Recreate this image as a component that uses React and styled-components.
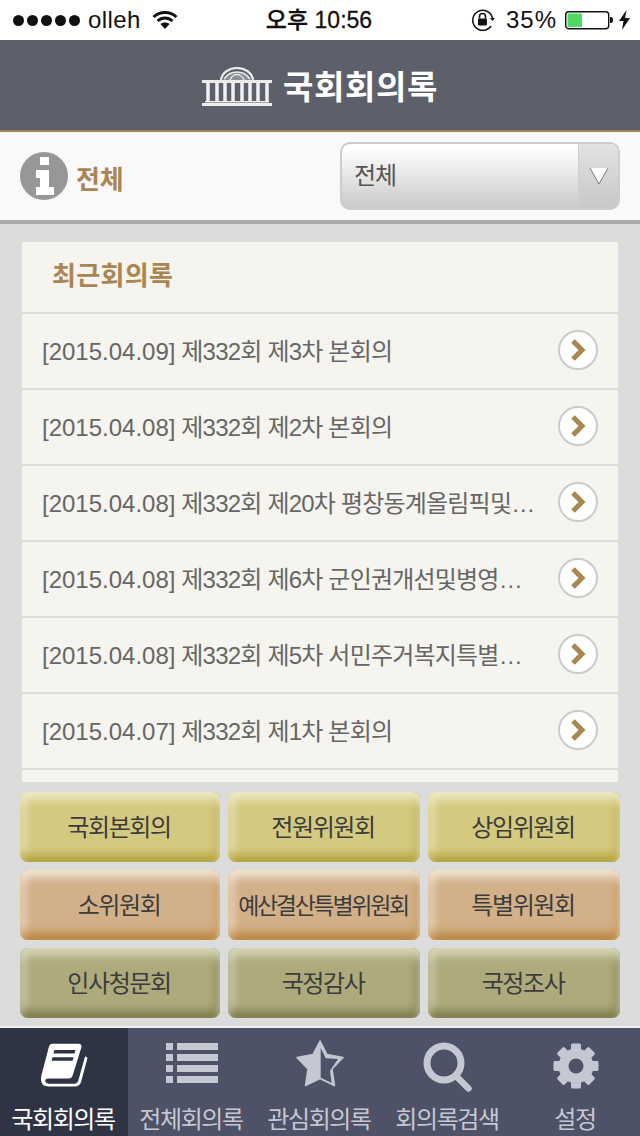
import React from "react";
import styled, { createGlobalStyle } from "styled-components";

const FONT = `"Liberation Sans", "Noto Sans CJK KR", sans-serif`;

const Global = createGlobalStyle`
  html, body { margin: 0; padding: 0; background: #dcdcdc; }
  body { font-family: ${FONT}; }
  * { box-sizing: border-box; }
`;

const Page = styled.div`
  width: 640px;
  height: 1136px;
  display: flex;
  flex-direction: column;
  overflow: hidden;
  background: #dcdcdc;
`;

const StatusBar = styled.div`
  height: 40px;
  background: #fff;
  display: grid;
  grid-template-columns: 1fr auto 1fr;
  align-items: center;
  color: #111;
  font-size: 24px;
  line-height: 40px;
`;
const StatusLeft = styled.div`
  display: flex;
  align-items: center;
  padding-left: 13px;
`;
const Dots = styled.div`
  display: flex;
  gap: 3px;
  margin-right: 8px;
`;
const Dot = styled.span`
  width: 11px;
  height: 11px;
  border-radius: 50%;
  background: #111;
`;
const Carrier = styled.span`
  letter-spacing: 0.4px;
`;
const Wifi = styled.svg`
  width: 26px;
  height: 20px;
  margin-left: 11px;
`;
const StatusTime = styled.div`
  font-weight: 500;
  font-size: 23px;
  padding-right: 2px;
  -webkit-text-stroke: 0.3px #111;
`;
const StatusRight = styled.div`
  display: flex;
  align-items: center;
  justify-content: flex-end;
  padding-right: 10px;
`;
const Percent = styled.span`
  margin: 0 8px 0 11px;
  letter-spacing: 1px;
`;

const Header = styled.header`
  height: 92px;
  background: #5d606a;
  border-bottom: 2px solid #a07f52;
  display: flex;
  align-items: center;
  justify-content: center;
  gap: 11px;
  color: #fff;
`;
const Logo = styled.svg`
  width: 70px;
  height: 39px;
  margin-top: 3px;
`;
const Title = styled.h1`
  margin: 0;
  padding-top: 4px;
  font-size: 33px;
  font-weight: 700;
  letter-spacing: 0.6px;
  line-height: 1;
`;

const FilterBar = styled.div`
  height: 92px;
  background: #f9f9f9;
  border-bottom: 4px solid #a9a9a9;
  display: flex;
  align-items: center;
  justify-content: space-between;
  padding: 0 20px;
`;
const FilterLabel = styled.div`
  display: flex;
  align-items: center;
  gap: 8px;
  font-size: 26px;
  font-weight: 700;
  color: #ab8551;
  letter-spacing: -0.2px;
`;
const FilterText = styled.span`
  padding-top: 3px;
`;
const Select = styled.div`
  width: 280px;
  height: 68px;
  border: 2px solid #cdcdcd;
  border-radius: 10px;
  overflow: hidden;
  display: flex;
  background: linear-gradient(#fff 5%, #cacaca 100%);
  font-size: 24px;
  color: #555;
`;
const SelectValue = styled.div`
  flex: 1;
  padding: 0 0 6px 12px;
  display: flex;
  align-items: center;
  letter-spacing: -1px;
`;
const SelectArrow = styled.div`
  width: 40px;
  border-left: 1px solid #d0d0d0;
  background: linear-gradient(#e2e2e2, #c8c8c8);
  display: flex;
  align-items: center;
  justify-content: center;
`;

const Main = styled.main`
  flex: 1;
  min-height: 0;
  padding: 18px 20px 8px;
  display: flex;
  flex-direction: column;
  gap: 10px;
`;
const ListPanel = styled.section`
  height: 540px;
  margin: 0 2px;
  overflow: hidden;
  background: #f5f4ee;
  flex-shrink: 0;
`;
const ListHeading = styled.h2`
  margin: 0;
  height: 70px;
  padding: 0 0 7px 30px;
  display: flex;
  align-items: center;
  font-size: 26px;
  font-weight: 700;
  letter-spacing: 0.3px;
  color: #ab8551;
`;
const Row = styled.div`
  height: 76px;
  border-top: 2px solid #dcdcdc;
  display: flex;
  align-items: center;
  padding: 0 20px;
  gap: 20px;
`;
const RowText = styled.div`
  flex: 1;
  min-width: 0;
  padding-bottom: 4px;
  white-space: nowrap;
  overflow: hidden;
  text-overflow: ellipsis;
  font-size: 24px;
  color: #666;
  letter-spacing: -0.8px;
`;
const RowDate = styled.span`
  letter-spacing: 0;
`;
const RowButton = styled.div`
  flex: none;
  width: 40px;
  height: 40px;
  margin-bottom: 2px;
  border: 2px solid #cbcbcb;
  border-radius: 50%;
  background: #fff;
  display: flex;
  align-items: center;
  justify-content: center;
`;

const ButtonGrid = styled.div`
  display: grid;
  grid-template-columns: 200px 192px 192px;
  grid-auto-rows: 70px;
  gap: 8px;
`;
const palettes = {
  yellow: { bg: "#d3ca80", top: "#f0ebc8", bottom: "#b3a33a", side: "#bdae4e" },
  orange: { bg: "#d2b189", top: "#f2e3d2", bottom: "#b98540", side: "#c19352" },
  olive: { bg: "#aeaa7c", top: "#d9d8bb", bottom: "#7c794c", side: "#87845a" },
};
const CategoryButton = styled.div`
  border-radius: 8px;
  display: flex;
  align-items: center;
  justify-content: center;
  font-size: ${(p) => (p.$compact ? "23px" : "24px")};
  letter-spacing: ${(p) => (p.$compact ? "-2.3px" : "-1.4px")};
  color: #3c3c3c;
  padding: 0 2px 3px 0;
  white-space: nowrap;
  background: ${(p) => palettes[p.$tone].bg};
  box-shadow:
    inset 0 7px 10px ${(p) => palettes[p.$tone].top},
    inset 0 -7px 10px ${(p) => palettes[p.$tone].bottom},
    inset -4px 0 8px ${(p) => palettes[p.$tone].side},
    inset 5px 0 8px ${(p) => palettes[p.$tone].top};
`;

const TabBar = styled.nav`
  height: 110px;
  flex: none;
  margin-top: -2px;
  border-top: 2px solid #f0f0f0;
  background: #4d5266;
  display: grid;
  grid-template-columns: repeat(5, 128px);
`;
const Tab = styled.div`
  display: flex;
  flex-direction: column;
  align-items: center;
  background: ${(p) => (p.$active ? "#2f3445" : "transparent")};
  color: ${(p) => (p.$active ? "#fff" : "#c5c8d2")};
  padding-top: 12px;
  overflow: hidden;
`;
const TabIcon = styled.div`
  height: 53px;
  display: flex;
  align-items: flex-start;
  justify-content: center;
`;
const TabLabel = styled.div`
  font-size: 24px;
  letter-spacing: -1.4px;
  line-height: 30px;
  white-space: nowrap;
  margin: 12px 0 0 -2px;
`;

const Chevron = () => (
  <svg width="16" height="22" viewBox="0 0 16 22">
    <path d="M3 2 L12 11 L3 20" fill="none" stroke="#ab8551" strokeWidth="5" />
  </svg>
);

const Dome = () => (
  <Logo viewBox="0 0 70 39" fill="none" stroke="#ececec">
    <path d="M19 13 C20 5 28 1 35 1 C42 1 50 5 51 13" strokeWidth="2.200" />
    <path d="M21 13 C24 8 30 5.500 35 5.500 C40 5.500 46 8 49 13 Z" fill="#8d8f96" stroke="none" />
    <path d="M22 12 C25 7.500 30 5 35 5 C40 5 45 7.500 48 12" strokeWidth="1.600" />
    <path d="M28 13 C29.500 9 33 7.500 35 7.500 C37 7.500 40.500 9 42 13" strokeWidth="1.500" />
    <rect x="0" y="13" width="70" height="3" fill="#ececec" stroke="none" />
    <g strokeWidth="3.500" stroke="#f0f0f0">
      {[6, 15, 23, 31, 40, 48, 56, 65].map((x) => (
        <path key={x} d={`M${x} 16 V34`} />
      ))}
    </g>
    <rect x="3" y="34" width="64" height="1.500" fill="#ececec" stroke="none" />
    <rect x="0" y="36" width="70" height="3" fill="#ececec" stroke="none" />
  </Logo>
);

const InfoIcon = () => (
  <svg width="48" height="48" viewBox="0 0 48 48">
    <circle cx="24" cy="24" r="24" fill="#979797" />
    <path fill="#fff" d="M20 5h9v8h-9z M16 18h13v17h5v8H16v-8h4v-9h-4z" />
  </svg>
);

const BookIcon = () => (
  <svg width="48" height="48" viewBox="0 -3 50 48">
    <path
      fill="#fff"
      fillRule="evenodd"
      d="M13 0 H40 Q44 0 43 4 L34 33 Q33 36 30 36 H9 Q5 36 5.500 39 Q6 41.500 9 41.500 H36 Q39 41.500 40 38 L47 13 L49.500 14.500 L43 39 Q41.500 44.500 36 44.500 H9 Q1 44.500 1 37 Q1 34 2 31 L9 4 Q10 0 13 0 Z M15 6.500 L14 10 H36 L37 6.500 Z M13 14 L12 17.500 H34 L35 14 Z"
    />
  </svg>
);

const ListIcon = () => (
  <svg width="52" height="43" viewBox="0 -3 52 43" fill="#c5c8d2">
    {[0, 11, 22, 33].map((y) => (
      <g key={y}>
        <rect x="0" y={y} width="7" height="7" />
        <rect x="11" y={y} width="41" height="7" />
      </g>
    ))}
  </svg>
);

const StarIcon = () => (
  <svg width="48" height="47" viewBox="0 0 48 47">
    <path
      fill="#c5c8d2"
      stroke="#c5c8d2"
      strokeWidth="1.500"
      strokeLinejoin="round"
      d="M24 1 L31 14.500 L47 17.500 L36 29 L38.500 45.500 L24 38.500 L9.500 45.500 L12 29 L1 17.500 L17 14.500 Z"
    />
    <path fill="#4d5266" d="M24.700 8 L29.700 18.300 L42 19 L34 30.700 L35.700 43 L24.700 37.700 Z" />
  </svg>
);

const SearchIcon = () => (
  <svg width="50" height="53" viewBox="0 -3 50 53" fill="none" stroke="#c5c8d2">
    <circle cx="21" cy="20" r="17" strokeWidth="7" />
    <path d="M33 33 L45.500 45.500" strokeWidth="6.500" strokeLinecap="round" />
  </svg>
);

const GearIcon = () => (
  <svg width="46" height="49" viewBox="0 -3 46 49" fill="#c5c8d2">
    <circle cx="23" cy="23" r="12.500" fill="none" stroke="#c5c8d2" strokeWidth="10" />
    {[0, 45, 90, 135, 180, 225, 270, 315].map((a) => (
      <rect key={a} x="18" y="0.500" width="10" height="9" rx="1.500" transform={`rotate(${a} 23 23)`} />
    ))}
  </svg>
);

const rows = [
  ["[2015.04.09]", "제332회 제3차 본회의"],
  ["[2015.04.08]", "제332회 제2차 본회의"],
  ["[2015.04.08]", "제332회 제20차 평창동계올림픽및장애인올림픽"],
  ["[2015.04.08]", "제332회 제6차 군인권개선및병영문화혁신"],
  ["[2015.04.08]", "제332회 제5차 서민주거복지특별위원회"],
  ["[2015.04.07]", "제332회 제1차 본회의"],
];

const buttons = [
  ["국회본회의", "yellow"],
  ["전원위원회", "yellow"],
  ["상임위원회", "yellow"],
  ["소위원회", "orange"],
  ["예산결산특별위원회", "orange", true],
  ["특별위원회", "orange"],
  ["인사청문회", "olive"],
  ["국정감사", "olive"],
  ["국정조사", "olive"],
];

const tabs = [
  ["국회회의록", BookIcon],
  ["전체회의록", ListIcon],
  ["관심회의록", StarIcon],
  ["회의록검색", SearchIcon],
  ["설정", GearIcon],
];

export default function App() {
  return (
    <Page>
      <Global />
      <StatusBar>
        <StatusLeft>
          <Dots>
            {[0, 1, 2, 3, 4].map((i) => (
              <Dot key={i} />
            ))}
          </Dots>
          <Carrier>olleh</Carrier>
          <Wifi viewBox="0 0 26 20" fill="none" stroke="#111" strokeWidth="2.800">
            <path d="M1.500 7 C8 1 18 1 24.500 7" />
            <path d="M5.500 11 C10 7 16 7 20.500 11" />
            <path d="M13 19 L8.500 14 C11 12 15 12 17.500 14 Z" fill="#111" stroke="none" />
          </Wifi>
        </StatusLeft>
        <StatusTime>오후 10:56</StatusTime>
        <StatusRight>
          <svg width="24" height="24" viewBox="0 0 24 24" fill="none" stroke="#111" strokeWidth="1.500">
            <path d="M21.500 10 A10 10 0 1 0 20 18" />
            <path d="M19 10 L24 10 L21.500 13 Z" fill="#111" stroke="none" />
            <path d="M8.500 10.500 V8.500 A3 3 0 0 1 14.500 8.500 V10.500" strokeWidth="1.600" />
            <rect x="7" y="10.500" width="9" height="7" rx="1" fill="#111" stroke="none" />
          </svg>
          <Percent>35%</Percent>
          <svg width="54" height="24" viewBox="0 0 54 24">
            <rect x="0.700" y="3.700" width="43" height="17" rx="3" fill="none" stroke="#111" strokeWidth="1.400" />
            <rect x="2.500" y="5.500" width="14.500" height="13.500" fill="#4cd964" />
            <path d="M45 9 h1 a2 3 0 0 1 0 6 h-1 Z" fill="#111" />
          </svg>
          <svg width="11" height="20" viewBox="0 0 11 20">
            <path d="M7.500 0 L0 11 H4.500 L3 20 L11 8 H6 Z" fill="#111" />
          </svg>
        </StatusRight>
      </StatusBar>

      <Header>
        <Dome />
        <Title>국회회의록</Title>
      </Header>

      <FilterBar>
        <FilterLabel>
          <InfoIcon />
          <FilterText>전체</FilterText>
        </FilterLabel>
        <Select>
          <SelectValue>전체</SelectValue>
          <SelectArrow>
            <svg width="20" height="18" viewBox="0 0 20 18">
              <path d="M1 1 H19 L10 17 Z" fill="#fff" />
              <path d="M1 1 L10 17 L19 1" fill="none" stroke="#777" strokeWidth="1" />
            </svg>
          </SelectArrow>
        </Select>
      </FilterBar>

      <Main>
        <ListPanel>
          <ListHeading>최근회의록</ListHeading>
          {rows.map(([date, text], i) => (
            <Row key={i}>
              <RowText>
                <RowDate>{date}</RowDate> {text}
              </RowText>
              <RowButton>
                <Chevron />
              </RowButton>
            </Row>
          ))}
          <Row />
        </ListPanel>
        <ButtonGrid>
          {buttons.map(([label, tone, compact]) => (
            <CategoryButton key={label} $tone={tone} $compact={compact}>
              {label}
            </CategoryButton>
          ))}
        </ButtonGrid>
      </Main>

      <TabBar>
        {tabs.map(([label, Icon], i) => (
          <Tab key={label} $active={i === 0}>
            <TabIcon>
              <Icon />
            </TabIcon>
            <TabLabel>{label}</TabLabel>
          </Tab>
        ))}
      </TabBar>
    </Page>
  );
}
